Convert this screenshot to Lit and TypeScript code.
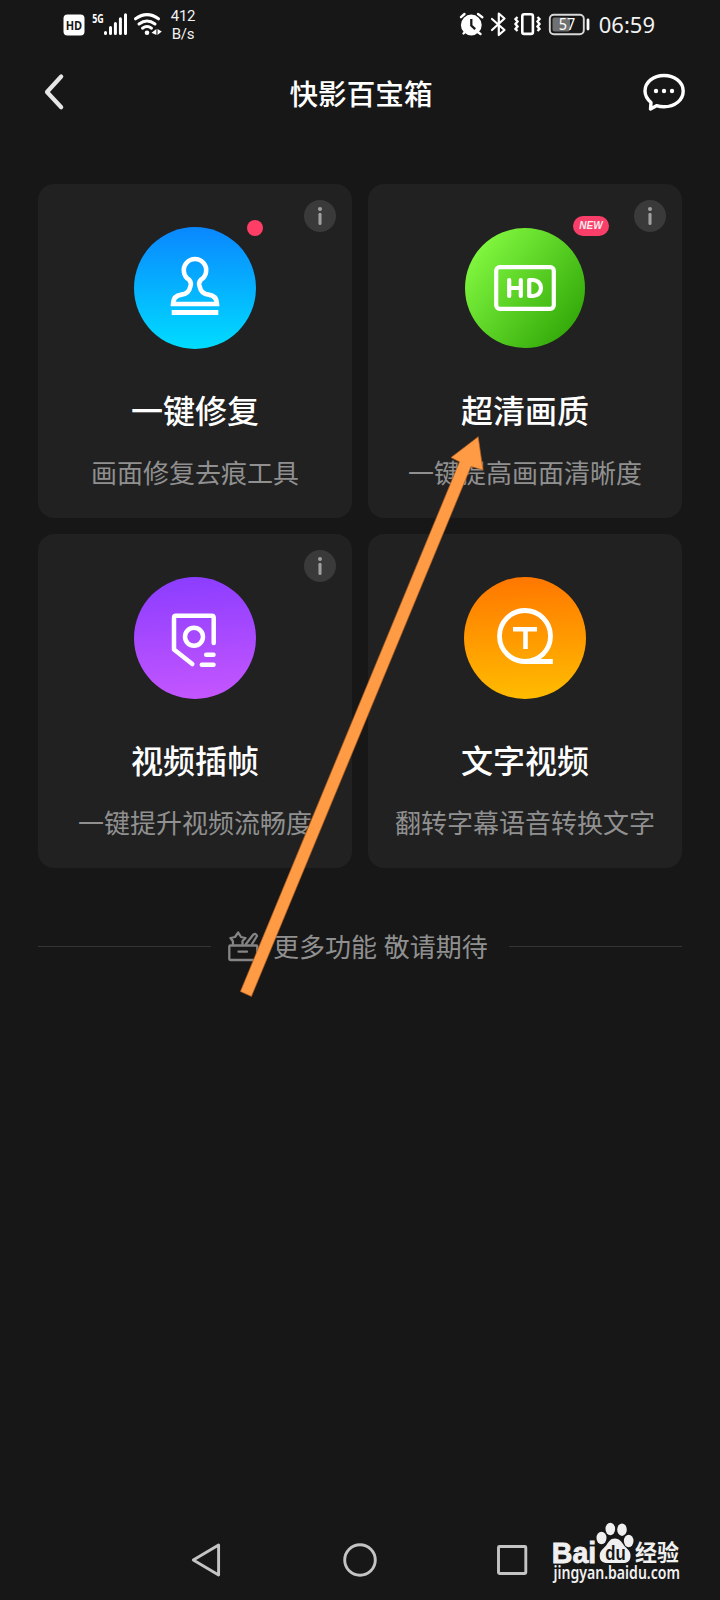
import { LitElement, html, css, svg, nothing } from "lit";
import { customElement, property } from "lit/decorators.js";

type Tool = {
  id: string;
  title: string;
  desc: string;
  info?: boolean;
  mark?: "dot" | "new";
};

const TOOLS: Tool[] = [
  { id: "stamp", title: "一键修复", desc: "画面修复去痕工具", info: true, mark: "dot" },
  { id: "hd", title: "超清画质", desc: "一键提高画面清晰度", info: true, mark: "new" },
  { id: "frame", title: "视频插帧", desc: "一键提升视频流畅度", info: true },
  { id: "text", title: "文字视频", desc: "翻转字幕语音转换文字" },
];

// Glyphs share the 122 x 122 box of the round badge.
const GLYPHS: Record<string, unknown> = {
  stamp: svg`
    <path d="M55.2 52.8 A11.2 11.2 0 1 1 66.8 52.8 Q64.2 55.5 65.8 60 C67 66 70.500 67.200 74.500 67.600 Q82.800 68.500 83 77 H39 Q39.200 68.500 47.500 67.600 C51.500 67.200 55 66 56.200 60 Q57.800 55.5 55.200 52.8 Z" stroke-width="4.600"/>
    <path d="M37.700 85.500 H84.300" stroke-width="4.800"/>`,
  hd: svg`
    <rect x="32.200" y="40.200" width="57.600" height="41.600" rx="3.500" stroke-width="4.200"/>
    <path d="M45.200 53 V69 M56.800 53 V69 M45.200 61 H56.800 M65.200 53 V69 H69 A8 8 0 0 0 69 53 Z" stroke-width="4.200" stroke-linecap="round" stroke-linejoin="round"/>`,
  frame: svg`
    <path d="M79.700 66 V40.700 Q79.700 38.700 77.700 38.700 H42 Q40 38.700 40 40.700 V72.500 L58.300 87" stroke-width="4.500" stroke-linecap="round" stroke-linejoin="round"/>
    <circle cx="60" cy="59.700" r="9" stroke-width="4.500"/>
    <path d="M72.200 77.700 H79.500 M67.800 87.700 H79.500" stroke-width="4.500" stroke-linecap="round"/>`,
  text: svg`
    <circle cx="61" cy="59" r="25.500" stroke-width="4.800"/>
    <path d="M61 84.500 H88.800" stroke-width="5"/>
    <path d="M49 52.300 H73 M61.500 52.300 V72" stroke-width="4.600"/>`,
};

@customElement("status-bar")
class StatusBar extends LitElement {
  static styles = css`
    :host { display: block; height: 48px; color: #f2f2f2; }
    .bar { display: flex; align-items: center; height: 48px; padding-left: 60px; padding-right: 60px; justify-content: space-between; }
    .side { display: flex; align-items: center; }
    .speed { width: 30px; margin-left: 3px; font: 15px/18px Roboto, sans-serif; letter-spacing: -0.3px; text-align: center; padding-top: 1px; }
    .time { font: 22px/28px "Noto Sans", sans-serif; width: 61px; text-align: right; margin-right: 5px; margin-left: 2px; }
    svg { display: block; }
    .hd { font: 700 13px "Open Sans", sans-serif; }
    .gen { font: 700 12px "Open Sans", sans-serif; }
    .level { font: 16px "Noto Sans", sans-serif; }
  `;
  render() {
    return html`<div class="bar">
      <div class="side">
        <svg width="105" height="48" viewBox="60 0 105 48" fill="#fff">
          <rect x="63.500" y="14.500" width="21" height="21" rx="4"/>
          <text class="hd" x="65.700" y="30" fill="#171717" textLength="16.500" lengthAdjust="spacingAndGlyphs">HD</text>
          <text class="gen" x="92.200" y="22.500" textLength="11.500" lengthAdjust="spacingAndGlyphs">5G</text>
          <path d="M105.500 32.400V33.500M110.500 27.500V33.500M115.400 23.500V33.500M120.400 18.800V33.500M125.500 14.800V33.500" stroke="#fff" stroke-width="3" stroke-linecap="round"/>
          <g fill="none" stroke="#fff" stroke-width="3" stroke-linecap="round">
            <path d="M135.500 18.800 Q147 10.500 158.500 18.800M139 24 Q147 18 155 24M142.500 28.200 Q147 24.800 151.500 28.200"/>
          </g>
          <circle cx="147" cy="32.700" r="2.300"/>
          <path d="M156.400 29V35L151.500 32.800ZM157.500 29V35L161.800 31.500Z"/>
        </svg>
        <div class="speed">412<br>B/s</div>
      </div>
      <div class="side">
        <svg width="135" height="48" viewBox="457 0 135 48" fill="none" stroke="#fff">
          <circle cx="471.300" cy="25" r="10.400" fill="#fff" stroke="none"/>
          <path d="M471.300 19V25.500L475.200 29.200" stroke="#171717" stroke-width="2.300"/>
          <path d="M461 17.200L464.500 14M478 14L482.300 17.200M463.500 33.500L465.500 31.500M477 31.500L480.500 34" stroke-width="2.400" stroke-linecap="round"/>
          <path d="M492 19L504.500 30L498.800 35V13.500L504.500 18.500L492 30" stroke-width="2.200" stroke-linecap="round" stroke-linejoin="round"/>
          <rect x="522.300" y="14.300" width="10.600" height="19.600" rx="2" stroke-width="2.600"/>
          <path d="M518 17L516 19L518 21.500L516 24L518 26.500L516 29L518 31M538 17L540 19L538 21.500L540 24L538 26.500L540 29L538 31" transform="translate(-.5 0)" stroke-width="2.400"/>
          <rect x="549.800" y="14.800" width="34" height="19.500" rx="4" stroke="#d8d8d8" stroke-width="1.900"/>
          <rect x="552.500" y="17.500" width="17.500" height="14" rx="2" fill="#707070" stroke="none"/>
          <path d="M588 20V29" stroke-width="2.800" stroke-linecap="round"/>
          <text class="level" x="558.700" y="30" fill="#fff" stroke="none" textLength="16.500" lengthAdjust="spacingAndGlyphs">57</text>
        </svg>
        <div class="time">06:59</div>
      </div>
    </div>`;
  }
}

@customElement("tool-card")
class ToolCard extends LitElement {
  @property({ attribute: false }) tool!: Tool;
  static styles = css`
    :host { display: block; }
    .card { position: relative; box-sizing: border-box; height: 334px; border-radius: 16px; background: #212121; padding-top: 43px; display: flex; flex-direction: column; align-items: center; white-space: nowrap; }
    .badge { width: 122px; height: 122px; border-radius: 50%; }
    .badge.hd { width: 120px; height: 120px; margin: 1px; }
    .stamp { background: linear-gradient(180deg, #0a87ff, #00dcff); }
    .hd { background: linear-gradient(128deg, #86fc43 8%, #2ea506 92%); }
    .frame { background: linear-gradient(175deg, #8a3cff, #c657ff); }
    .text { background: linear-gradient(178deg, #ff7600, #ffbd00); }
    .glyph { display: block; width: 100%; height: 100%; }
    .title { font-size: 32px; line-height: 40px; margin-top: 40px; color: #fff; font-weight: 500; }
    .desc { font-size: 26px; line-height: 34px; margin-top: 26px; color: #909090; }
    .info { position: absolute; top: 16px; right: 16px; }
    .dot { position: absolute; left: 209px; top: 36px; width: 16px; height: 16px; border-radius: 50%; background: #ff3e67; }
    .new { position: absolute; left: 205px; top: 32px; width: 36px; height: 20px; border-radius: 10px; background: #f93f69; color: #ffe9ee; font: italic 700 10px/20px "Liberation Sans", sans-serif; text-align: center; }
  `;
  render() {
    const t = this.tool;
    return html`<div class="card">
      <div class="badge ${t.id}">
        <svg class="glyph" viewBox=${t.id === "hd" ? "1 1 120 120" : "0 0 122 122"} fill="none" stroke="#fff">${GLYPHS[t.id]}</svg>
      </div>
      <div class="title">${t.title}</div>
      <div class="desc">${t.desc}</div>
      ${t.mark === "dot" ? html`<span class="dot"></span>` : nothing}
      ${t.mark === "new" ? html`<span class="new">NEW</span>` : nothing}
      ${t.info
        ? html`<svg class="info" width="32" height="32" viewBox="0 0 32 32">
            <circle cx="16" cy="16" r="16" fill="#3a3a3a"/>
            <circle cx="16" cy="9" r="2" fill="#a0a0a0"/>
            <path d="M16 14.300V23.500" stroke="#a0a0a0" stroke-width="3.100" stroke-linecap="round"/>
          </svg>`
        : nothing}
    </div>`;
  }
}

@customElement("app-root")
class AppRoot extends LitElement {
  static styles = css`
    :host { display: block; font-family: "Noto Sans CJK SC", sans-serif; }
    .screen { position: relative; display: flex; flex-direction: column; width: 720px; height: 1600px; background: #171717; overflow: hidden; }
    svg { display: block; }
    .header { display: flex; align-items: center; justify-content: space-between; height: 90px; padding: 0 32px 0 40px; }
    .header h1 { margin: 0; font-size: 28.600px; line-height: 40px; font-weight: 500; color: #fff; padding-left: 12px; }
    .header svg { margin-bottom: 2px; }
    .grid { display: grid; grid-template-columns: 314px 314px; gap: 16px; padding: 46px 38px 0; }
    .more { display: flex; align-items: center; height: 40px; margin: 58px 38px 0; color: #909090; font-size: 26px; line-height: 40px; white-space: nowrap; }
    .rule { flex: 1; height: 1px; background: #353535; }
    .more svg { margin-left: 16px; }
    .more span { width: 215px; margin: 0 21px 0 13px; word-spacing: 1px; }
    .nav { margin-top: auto; display: flex; align-items: flex-end; padding-left: 180px; }
    .logo { margin-left: 10px; overflow: visible; }
    .brand { font: 700 30px "Liberation Sans", sans-serif; }
    .du { font: 700 21px "Liberation Sans", sans-serif; }
    .cn { font: 700 23px "Noto Sans CJK SC", sans-serif; }
    .url { font: 600 17px "Noto Sans", sans-serif; }
    .arrow { position: absolute; left: 0; top: 0; }
  `;
  render() {
    return html`<main class="screen">
      <status-bar></status-bar>
      <header class="header">
        <svg width="30" height="44" viewBox="40 70 30 44" fill="none" stroke="#e6e6e6" stroke-width="4.200" stroke-linecap="round" stroke-linejoin="round"><path d="M61.200 76.500L47 92L61.200 107.300"/></svg>
        <h1>快影百宝箱</h1>
        <svg width="48" height="44" viewBox="640 70 48 44" fill="none" stroke="#fff" stroke-width="3.400" stroke-linejoin="round">
          <path d="M651 102.500 C647 99 645 95.500 645 91 C645 82 653.500 75.500 664 75.500 S683.200 82 683.200 91 S675 106.800 664 106.800 Q660 106.800 656.500 105.700 L650.500 109 Z"/>
          <g fill="#fff" stroke="none"><circle cx="656" cy="91" r="2.200"/><circle cx="664" cy="91" r="2.200"/><circle cx="672" cy="91" r="2.200"/></g>
        </svg>
      </header>
      <section class="grid">${TOOLS.map((t) => html`<tool-card .tool=${t}></tool-card>`)}</section>
      <div class="more">
        <i class="rule"></i>
        <svg width="33" height="34" viewBox="227 929 33 34" fill="none" stroke="#858585" stroke-width="2.300" stroke-linejoin="round" stroke-linecap="round">
          <rect x="229.300" y="945.500" width="28" height="14.500" rx="1"/>
          <path d="M238.500 951.700H247"/>
          <path d="M233 944L232.800 941L230.500 938L235 937L238.200 932.500L241 937L245.500 938L242.500 941V944M246 944L253 935Q256 932.500 257 936L252 944"/>
        </svg>
        <span>更多功能 敬请期待</span>
        <i class="rule"></i>
      </div>
      <footer class="nav">
        <svg width="360" height="90" viewBox="180 1510 360 90" fill="none" stroke="#c4c4c4" stroke-width="2.900" stroke-linejoin="round">
          <path d="M193.300 1560L218.600 1545V1575Z"/>
          <circle cx="360" cy="1560" r="15.300"/>
          <rect x="498.500" y="1546.500" width="27.300" height="27" rx="1"/>
        </svg>
        <svg class="logo" width="140" height="90" viewBox="550 1510 140 90" fill="#f0f0f0">
          <text class="brand" x="551.800" y="1562.800" textLength="44.500" lengthAdjust="spacingAndGlyphs" stroke="#f0f0f0" stroke-width=".8">Bai</text>
          <ellipse cx="601.500" cy="1538" rx="5" ry="6.200"/>
          <ellipse cx="610.300" cy="1529" rx="4.800" ry="6.200"/>
          <ellipse cx="622" cy="1529.700" rx="4.800" ry="6.200"/>
          <ellipse cx="628.700" cy="1541" rx="4.800" ry="6.200"/>
          <path d="M615 1538.500C620 1538.500 622 1542.500 624 1545.500C627 1549 630.500 1550.500 630.500 1556C630.500 1561.500 627 1563.200 622 1563H608C603 1563.200 599.500 1561 599.700 1555.500C600 1550 604 1548.500 606.500 1545C608.500 1542 610 1538.500 615 1538.500Z"/>
          <text class="du" x="605.300" y="1559.500" fill="#171717" textLength="20.500" lengthAdjust="spacingAndGlyphs">du</text>
          <text class="cn" x="635" y="1560.800" textLength="44" lengthAdjust="spacingAndGlyphs">经验</text>
          <text class="url" x="553.500" y="1578.800" textLength="126.500" lengthAdjust="spacingAndGlyphs">jingyan.baidu.com</text>
        </svg>
      </footer>
      <svg class="arrow" width="720" height="1600" viewBox="0 0 720 1600">
        <path d="M478.200 436.700L451 457.500L459.500 461.800L240.400 991.500L251.400 996.500L471 466.500L483 470Z" fill="#ff9a45" stroke="#a85a20" stroke-width=".7"/>
      </svg>
    </main>`;
  }
}
